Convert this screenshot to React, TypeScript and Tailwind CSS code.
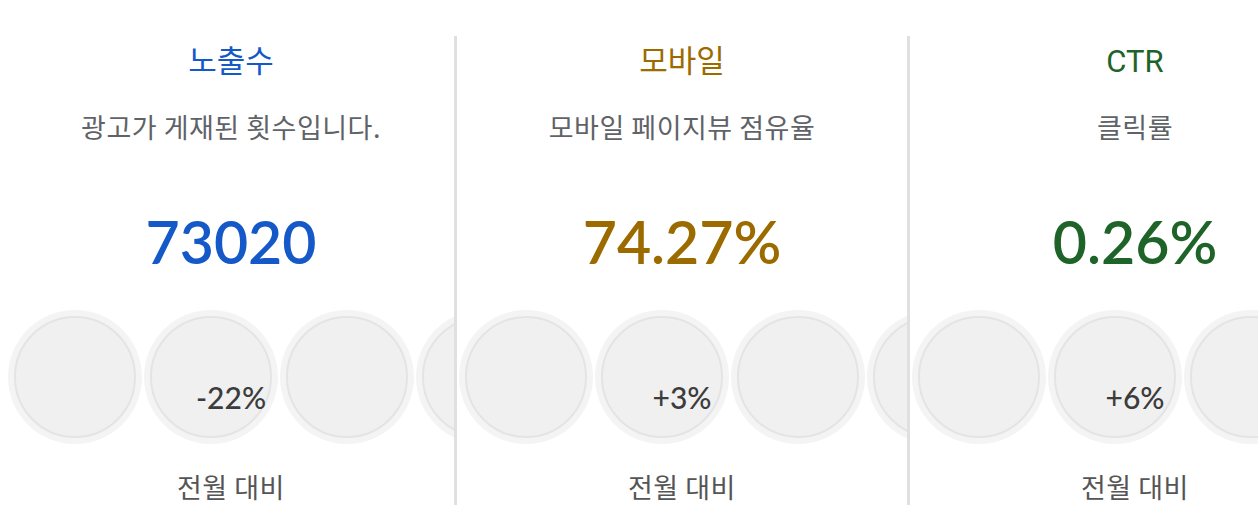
import React from 'react'

type Metric = {
  title: string
  desc: string
  value: string
  change: string
  color: string
}

const metrics: Metric[] = [
  { title: '노출수', desc: '광고가 게재된 횟수입니다.', value: '73020', change: '-22%', color: 'text-[#1558c8]' },
  { title: '모바일', desc: '모바일 페이지뷰 점유율', value: '74.27%', change: '+3%', color: 'text-[#9c6b00]' },
  { title: 'CTR', desc: '클릭률', value: '0.26%', change: '+6%', color: 'text-[#1e6328]' },
]

const sans = "font-['Roboto','Noto_Sans_CJK_KR',sans-serif]"
const kr = "font-['Noto_Sans_CJK_KR','Noto_Sans',sans-serif]"
const num = "font-['Lato','Noto_Sans',sans-serif]"

function Bubble() {
  return (
    <div className="w-[134px] h-[134px] shrink-0 rounded-full bg-[#f4f4f4] p-[6px]">
      <div className="w-full h-full rounded-full border-2 border-[#e4e4e4] bg-[#f0f0f0]" />
    </div>
  )
}

function Panel({ m, first }: { m: Metric; first: boolean }) {
  return (
    <div
      className={
        first
          ? 'w-[446px] h-[469px] shrink-0 flex flex-col items-center overflow-hidden'
          : 'w-[453px] h-[469px] shrink-0 flex flex-col items-center overflow-hidden border-l-[3px] border-[#e0e0e0]'
      }
    >
      <div className={`mt-[8px] leading-[36px] text-[31px] ${sans} ${m.color}`}>{m.title}</div>
      <div className={`mt-[30px] leading-[34px] text-[27px] tracking-[0.5px] text-[#5f6368] ${kr}`}>{m.desc}</div>
      <div className={`mt-[66px] leading-[64px] text-[59px] font-semibold ${num} ${m.color}`}>{m.value}</div>
      <div className="relative mt-[36px] w-full">
        <div className={first ? 'flex gap-[2px]' : 'flex gap-[2px] pl-[2px]'}>
          <Bubble />
          <Bubble />
          <Bubble />
          <Bubble />
        </div>
        <div className={`absolute left-0 right-0 top-[71px] text-center leading-[32px] text-[30px] font-medium text-[#3c3c3c] ${num}`}>
          {m.change}
        </div>
      </div>
      <div className={`mt-[27px] leading-[32px] text-[27px] tracking-[0.5px] text-[#555] ${kr}`}>전월 대비</div>
    </div>
  )
}

export default function App() {
  return (
    <div className="w-[1258px] h-[514px] overflow-hidden bg-white">
      <div className="flex pt-[36px] pl-[8px]">
        {metrics.map((m, i) => (
          <Panel key={m.title} m={m} first={i === 0} />
        ))}
      </div>
    </div>
  )
}
